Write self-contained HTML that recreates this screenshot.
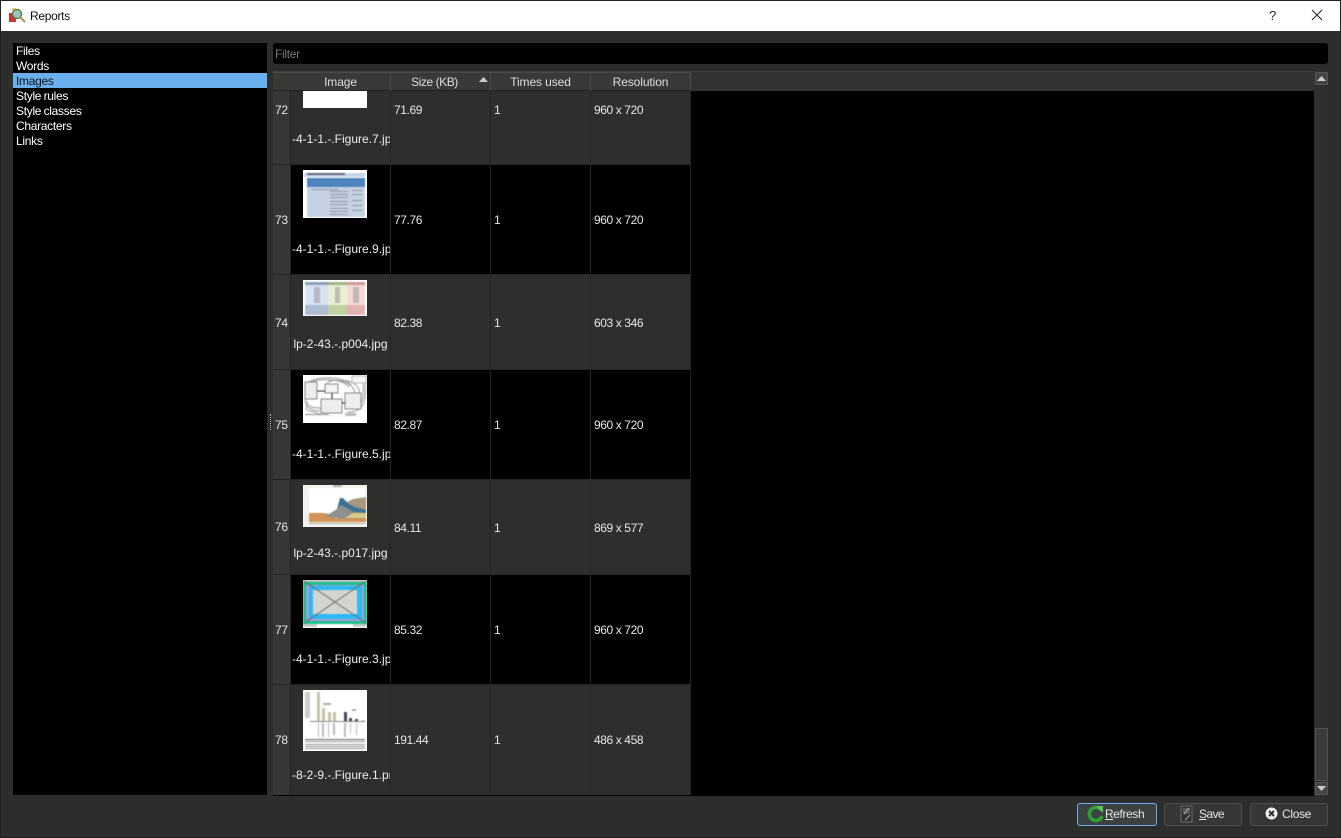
<!DOCTYPE html>
<html><head><meta charset="utf-8"><style>
html,body{margin:0;padding:0;background:#2d2d2b;width:1341px;height:838px;overflow:hidden}
body{position:relative;font:12px/15px "Liberation Sans",sans-serif;color:#e6e6e6}
div,span,svg{position:absolute;box-sizing:border-box}
.t{white-space:nowrap;letter-spacing:-.3px;word-spacing:-.6px}
.d{letter-spacing:-.4px;word-spacing:0}
.l{left:16px;color:#fff}
.row{left:273px;width:418px}
.num{left:0;top:0;bottom:0;width:18px;background:#363735;border-right:1px solid #242423}
.c{top:0;bottom:0;border-right:1px solid #232322}
.odd{background:#2e2e2c}.even{background:#000}
.h{top:72px;height:19px;background:#383a38;border-right:1px solid #4c4d4b;border-top:1px solid #4a4a48;text-align:center;line-height:18px;color:#ddd;letter-spacing:-.1px;border-bottom:1px solid #222}
.clip{left:291px;width:99px;overflow:hidden;text-align:center;height:16px;white-space:nowrap;color:#eee}
.clip span{position:static;display:inline-block;margin:0 -40px}
.fn{left:292px;width:98px;overflow:hidden;height:16px;white-space:nowrap;color:#eee}
.btn{top:803px;height:23px;border:1px solid #4e4f4d;border-radius:3px;background:#363735}
.th{left:303px;width:64px;background:#fff;overflow:hidden}
.b{filter:blur(.45px)}
</style></head><body>
<div style="left:0;top:0;width:1341px;height:838px;border:1px solid #222"></div>
<div style="left:1px;top:1px;width:1339px;height:30px;background:#fff"></div>
<svg style="left:9px;top:7px" width="17" height="17" viewBox="0 0 17 17"><rect x="0" y="6" width="7" height="9" fill="#c23a32"/><rect x="3" y="1" width="4" height="5" fill="#e8cf68"/><circle cx="8" cy="7" r="4.500" fill="#9cc7c0" stroke="#5d7d55" stroke-width="1.400"/><path d="M11 10l5 5" stroke="#b98a5a" stroke-width="2"/></svg>
<div class="t" style="left:30px;top:9px;color:#111">Reports</div>
<div class="t" style="left:1269px;top:8px;color:#222;font-size:13px">?</div>
<svg style="left:1311px;top:9px" width="13" height="13"><path d="M1 1l10 10M11 1L1 11" stroke="#222" fill="none"/></svg>

<div style="left:13px;top:43px;width:254px;height:752px;background:#000"></div>
<div style="left:13px;top:73px;width:254px;height:15px;background:#6ab0ef"></div>
<div class="t l" style="top:44px">Files</div>
<div class="t l" style="top:59px">Words</div>
<div class="t l" style="top:74px;color:#111">Images</div>
<div class="t l" style="top:89px">Style rules</div>
<div class="t l" style="top:104px">Style classes</div>
<div class="t l" style="top:119px">Characters</div>
<div class="t l" style="top:134px">Links</div>

<div style="left:273px;top:43px;width:1055px;height:21px;background:#000;border-radius:3px"></div>
<div class="t" style="left:275px;top:47px;color:#777">Filter</div>

<div style="left:270px;top:414px;width:2px;height:16px;border-left:1px dotted #aaa"></div>

<div style="left:273px;top:71px;width:1055px;height:725px;background:#000"></div>
<div style="left:273px;top:71px;width:1055px;height:20px;background:#333432;border-top:1px solid #3e3e3c"></div>
<div class="h" style="left:273px;width:18px;border-right:0"></div>
<div class="h" style="left:291px;width:100px">Image</div>
<div class="h" style="left:391px;width:100px;padding-right:12px;letter-spacing:-.45px">Size (KB)</div>
<svg style="left:479px;top:77px" width="9" height="5"><path d="M0 5L4.500 0 9 5z" fill="#ccc"/></svg>
<div class="h" style="left:491px;width:100px">Times used</div>
<div class="h" style="left:591px;width:100px">Resolution</div>

<!-- rows -->
<div class="row odd" style="top:91px;height:74px"><div class="num"></div><div class="c" style="left:18px;width:100px"></div><div class="c" style="left:118px;width:100px"></div><div class="c" style="left:218px;width:100px"></div><div class="c" style="left:318px;width:100px"></div></div>
<div class="row even" style="top:165px;height:110px"><div class="num"></div><div class="c" style="left:18px;width:100px"></div><div class="c" style="left:118px;width:100px"></div><div class="c" style="left:218px;width:100px"></div><div class="c" style="left:318px;width:100px"></div></div>
<div class="row odd" style="top:275px;height:95px"><div class="num"></div><div class="c" style="left:18px;width:100px"></div><div class="c" style="left:118px;width:100px"></div><div class="c" style="left:218px;width:100px"></div><div class="c" style="left:318px;width:100px"></div></div>
<div class="row even" style="top:370px;height:110px"><div class="num"></div><div class="c" style="left:18px;width:100px"></div><div class="c" style="left:118px;width:100px"></div><div class="c" style="left:218px;width:100px"></div><div class="c" style="left:318px;width:100px"></div></div>
<div class="row odd" style="top:480px;height:95px"><div class="num"></div><div class="c" style="left:18px;width:100px"></div><div class="c" style="left:118px;width:100px"></div><div class="c" style="left:218px;width:100px"></div><div class="c" style="left:318px;width:100px"></div></div>
<div class="row even" style="top:575px;height:110px"><div class="num"></div><div class="c" style="left:18px;width:100px"></div><div class="c" style="left:118px;width:100px"></div><div class="c" style="left:218px;width:100px"></div><div class="c" style="left:318px;width:100px"></div></div>
<div class="row odd" style="top:685px;height:110px"><div class="num"></div><div class="c" style="left:18px;width:100px"></div><div class="c" style="left:118px;width:100px"></div><div class="c" style="left:218px;width:100px"></div><div class="c" style="left:318px;width:100px"></div></div>
<div style="left:273px;top:164px;width:418px;height:1px;background:#252524"></div>
<div style="left:273px;top:274px;width:418px;height:1px;background:#252524"></div>
<div style="left:273px;top:369px;width:418px;height:1px;background:#252524"></div>
<div style="left:273px;top:479px;width:418px;height:1px;background:#252524"></div>
<div style="left:273px;top:574px;width:418px;height:1px;background:#252524"></div>
<div style="left:273px;top:684px;width:418px;height:1px;background:#252524"></div>

<!-- thumbnails -->
<div class="th" style="top:91px;height:17px"></div>
<svg class="th" style="top:170px;height:48px" width="64" height="48"><g class="b"><rect x="1" y="3" width="61" height="4" fill="#c5d5ea"/><rect x="4" y="3" width="38" height="2" fill="#667"/><rect x="4" y="8" width="58" height="9" fill="#4f83bd"/><rect x="4" y="17" width="58" height="30" fill="#c6d2e4"/><g fill="#8d97a6"><rect x="8" y="19" width="28" height="1"/><rect x="27" y="21" width="18" height="1"/><rect x="27" y="24" width="18" height="1"/><rect x="27" y="27" width="18" height="1"/><rect x="27" y="31" width="18" height="1"/><rect x="27" y="34" width="18" height="1"/><rect x="27" y="38" width="18" height="1"/><rect x="27" y="41" width="18" height="1"/><rect x="27" y="44" width="18" height="1"/><rect x="49" y="20" width="10" height="1"/><rect x="49" y="24" width="10" height="1"/><rect x="49" y="30" width="10" height="1"/><rect x="49" y="35" width="10" height="1"/><rect x="49" y="40" width="10" height="1"/></g></g></svg>
<svg class="th" style="top:280px;height:36px" width="64" height="36"><g class="b"><rect x="2" y="2" width="23" height="33" fill="#d7e2f3"/><rect x="25" y="2" width="19" height="33" fill="#e9efd2"/><rect x="44" y="2" width="18" height="33" fill="#f4d9d5"/><rect x="2" y="2" width="23" height="3" fill="#8fa0ba"/><rect x="25" y="2" width="19" height="3" fill="#a3b288"/><rect x="44" y="2" width="18" height="3" fill="#cf9a9a"/><rect x="2" y="25" width="23" height="10" fill="#afbdd3"/><rect x="25" y="25" width="19" height="10" fill="#bfd2a0"/><rect x="44" y="25" width="18" height="10" fill="#e2b3b0"/><g fill="#a0a0a0" opacity=".6"><rect x="11" y="7" width="6" height="16"/><rect x="32" y="7" width="5" height="16"/><rect x="50" y="7" width="6" height="16"/></g></g></svg>
<svg class="th" style="top:375px;height:48px" width="64" height="48"><g class="b"><g fill="none" stroke="#999" stroke-width="1"><path d="M2 10C8 1 40 0 48 10"/><path d="M6 8C14 3 38 3 46 12"/><path d="M4 30C0 38 8 34 18 40"/><path d="M2 24C2 34 10 36 18 36"/><path d="M4 26C4 32 10 33 18 33"/><path d="M24 8C30 2 50 6 52 18"/><path d="M44 34C56 34 62 30 60 8"/><path d="M44 37C58 38 64 30 62 8"/><path d="M38 6C48 4 58 12 56 18"/></g><rect x="2" y="7" width="12" height="17" fill="#ececec" stroke="#888"/><rect x="22" y="9" width="13" height="9" fill="#f3f3f3" stroke="#888"/><rect x="18" y="24" width="21" height="14" fill="#eee" stroke="#888"/><rect x="42" y="18" width="16" height="16" fill="#eee" stroke="#888"/><rect x="49" y="1" width="14" height="7" fill="#f4f4f4" stroke="#bbb"/><path d="M29 18v6M14 16h8M39 28h3" stroke="#222"/><rect x="2" y="39" width="24" height="1" fill="#888"/><rect x="42" y="38" width="11" height="3" fill="#bbb"/></g></svg>
<svg class="th" style="top:485px;height:42px" width="64" height="42"><g class="b"><rect width="64" height="42" fill="#f2f2ec"/><rect x="6" y="3" width="56" height="32" fill="#fff"/><rect x="30" y="0" width="9" height="2" fill="#aaa"/><path d="M34 28L37 13 44 17 50 14 63 12V36H34z" fill="#a8977d"/><path d="M34 24L37 13 40 13 46 19 52 22 63 25V28L50 27 42 22 38 28z" fill="#3e7394"/><path d="M6 28H20L26 29 34 24 38 20 46 25 50 28 63 28V33H6z" fill="#909090"/><path d="M42 33L50 28 63 28V33z" fill="#d8cc86"/><path d="M6 28H20L26 32 36 34 63 33V37H6z" fill="#d39357"/><rect x="6" y="38" width="56" height="1" fill="#aaa"/></g></svg>
<svg class="th" style="top:580px;height:48px" width="64" height="48"><g class="b"><rect y="0" width="64" height="2" fill="#bbb"/><rect y="2" width="64" height="42" fill="#18c08c"/><rect x="3" y="5" width="58" height="36" fill="#a899d8"/><rect x="6" y="6" width="53" height="33" fill="#2bbbf2"/><rect x="10" y="10" width="44" height="24" fill="#d4d4d0"/><path d="M1 1l62 42M63 1L1 43" stroke="#666" fill="none" stroke-width=".9"/><rect y="44" width="14" height="3" fill="#ccc"/><rect x="50" y="44" width="14" height="3" fill="#ccc"/></g></svg>
<svg class="th" style="top:690px;height:61px" width="64" height="61"><g class="b"><rect x="14" y="2" width="3" height="29" fill="#c8c3a8"/><rect x="19" y="18" width="3" height="13" fill="#c8c3a8"/><rect x="25" y="22" width="3" height="9" fill="#c8c3a8"/><rect x="30" y="22" width="3" height="9" fill="#c8c3a8"/><rect x="41" y="22" width="3" height="9" fill="#48484c"/><rect x="46" y="28" width="3" height="3" fill="#48484c"/><rect x="52" y="29" width="3" height="2" fill="#48484c"/><rect x="59" y="30" width="3" height="1" fill="#ccc"/><rect x="2" y="2" width="5" height="26" fill="#ccc"/><rect x="7" y="31" width="55" height="1" fill="#888"/><g fill="#bbb"><rect x="15" y="33" width="1" height="14"/><rect x="19" y="33" width="2" height="14"/><rect x="25" y="33" width="1" height="14"/><rect x="30" y="33" width="2" height="12"/><rect x="41" y="33" width="2" height="14"/><rect x="47" y="33" width="1" height="10"/><rect x="53" y="33" width="1" height="12"/></g><rect x="20" y="13" width="8" height="2" fill="#aaa"/><rect x="49" y="19" width="4" height="2" fill="#aaa"/><g fill="#666"><rect x="2" y="49" width="60" height="1"/><rect x="2" y="51" width="60" height="1" opacity=".7"/><rect x="2" y="54" width="60" height="1" opacity=".7"/><rect x="2" y="56" width="60" height="1" opacity=".7"/><rect x="2" y="58" width="60" height="1" opacity=".7"/></g></g></svg>

<!-- row nums -->
<div class="t" style="left:275px;top:103px">72</div>
<div class="t" style="left:275px;top:213px">73</div>
<div class="t" style="left:275px;top:316px">74</div>
<div class="t" style="left:275px;top:418px">75</div>
<div class="t" style="left:275px;top:520px">76</div>
<div class="t" style="left:275px;top:623px">77</div>
<div class="t" style="left:275px;top:733px">78</div>
<!-- filenames -->
<div class="fn" style="top:132px">-4-1-1.-.Figure.7.jpg</div>
<div class="fn" style="top:242px">-4-1-1.-.Figure.9.jpg</div>
<div class="clip" style="top:337px"><span>lp-2-43.-.p004.jpg</span></div>
<div class="fn" style="top:447px">-4-1-1.-.Figure.5.jpg</div>
<div class="clip" style="top:546px"><span>lp-2-43.-.p017.jpg</span></div>
<div class="fn" style="top:652px">-4-1-1.-.Figure.3.jpg</div>
<div class="fn" style="top:768px">-8-2-9.-.Figure.1.png</div>
<!-- data -->
<div class="t d" style="left:394px;top:103px">71.69</div><div class="t" style="left:494px;top:103px">1</div><div class="t d" style="left:594px;top:103px">960 x 720</div>
<div class="t d" style="left:394px;top:213px">77.76</div><div class="t" style="left:494px;top:213px">1</div><div class="t d" style="left:594px;top:213px">960 x 720</div>
<div class="t d" style="left:394px;top:316px">82.38</div><div class="t" style="left:494px;top:316px">1</div><div class="t d" style="left:594px;top:316px">603 x 346</div>
<div class="t d" style="left:394px;top:418px">82.87</div><div class="t" style="left:494px;top:418px">1</div><div class="t d" style="left:594px;top:418px">960 x 720</div>
<div class="t d" style="left:394px;top:521px">84.11</div><div class="t" style="left:494px;top:521px">1</div><div class="t d" style="left:594px;top:521px">869 x 577</div>
<div class="t d" style="left:394px;top:623px">85.32</div><div class="t" style="left:494px;top:623px">1</div><div class="t d" style="left:594px;top:623px">960 x 720</div>
<div class="t d" style="left:394px;top:733px">191.44</div><div class="t" style="left:494px;top:733px">1</div><div class="t d" style="left:594px;top:733px">486 x 458</div>

<!-- scrollbar -->
<div style="left:1314px;top:71px;width:14px;height:725px;background:#2f302e"></div>
<div style="left:1315px;top:72px;width:13px;height:13px;background:#454644;border:1px solid #555"></div>
<svg style="left:1317px;top:76px" width="9" height="5"><path d="M0 5L4.500 0 9 5z" fill="#ccc"/></svg>
<div style="left:1315px;top:728px;width:13px;height:53px;background:#3b3c3a;border:1px solid #525351"></div>
<div style="left:1315px;top:782px;width:13px;height:13px;background:#454644;border:1px solid #555"></div>
<svg style="left:1317px;top:786px" width="9" height="5"><path d="M0 0L4.500 5 9 0z" fill="#ccc"/></svg>

<!-- buttons -->
<div class="btn" style="left:1077px;width:80px;border-color:#6ab0ef;background:#3d4142"></div>
<svg style="left:1087px;top:805px" width="17" height="18" viewBox="0 0 17 18"><path d="M14 5A6.500 6.500 0 1 0 15 11" fill="none" stroke="#2e9f32" stroke-width="3.600"/><path d="M9 1l7 0 0 7z" fill="#5cc65c"/></svg>
<div class="t" style="left:1105px;top:807px;letter-spacing:-.4px"><u>R</u>efresh</div>
<div class="btn" style="left:1164px;width:78px"></div>
<svg style="left:1179px;top:805px" width="16" height="18" viewBox="0 0 16 18"><path d="M2 1h11v16H2z" fill="#2f3130" stroke="#6b6d6b"/><path d="M4 3h7v6H4z" fill="#5a5c5b"/><path d="M5 9l5-6M6 15l5-5" stroke="#aaa"/></svg>
<div class="t" style="left:1199px;top:807px;letter-spacing:-.6px"><u>S</u>ave</div>
<div class="btn" style="left:1250px;width:78px"></div>
<svg style="left:1265px;top:807px" width="13" height="13" viewBox="0 0 13 13"><circle cx="6.500" cy="6.500" r="6" fill="#eee"/><path d="M4 4l5 5M9 4L4 9" stroke="#333" stroke-width="2"/></svg>
<div class="t" style="left:1282px;top:807px">Close</div>
</body></html>
